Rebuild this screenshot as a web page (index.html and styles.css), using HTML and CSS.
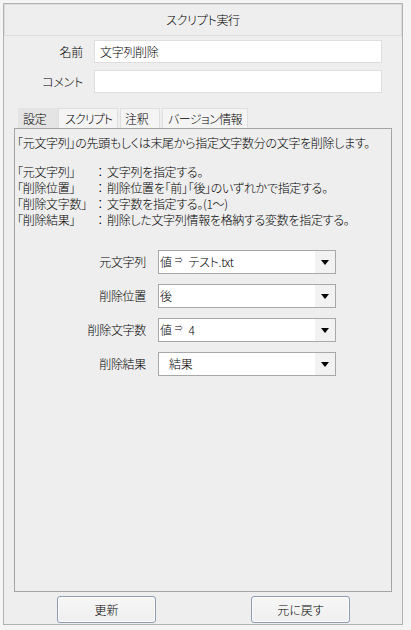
FILE: index.html
```html
<!DOCTYPE html>
<html lang="ja">
<head>
<meta charset="utf-8">
<link rel="stylesheet" href="styles.css">
</head>
<body>
<div class="frame">
  <div class="title">スクリプト実行</div>
  <div class="fields">
    <label class="flabel">名前</label>
    <div class="input">文字列削除</div>
    <label class="flabel">コメント</label>
    <div class="input"></div>
  </div>
  <div class="tabs">
    <div class="tab active t-a">設定</div>
    <div class="tab t-b">スクリプト</div>
    <div class="tab t-c">注釈</div>
    <div class="tab t-d">バージョン情報</div>
  </div>
  <div class="panel">
    <p class="intro">「元文字列」の先頭もしくは末尾から指定文字数分の文字を削除します。</p>
    <div class="desc">
      <div class="drow"><span class="dkey">「元文字列」</span><span class="dcolon">：</span><span>文字列を指定する。</span></div>
      <div class="drow"><span class="dkey">「削除位置」</span><span class="dcolon">：</span><span>削除位置を「前」「後」のいずれかで指定する。</span></div>
      <div class="drow"><span class="dkey">「削除文字数」</span><span class="dcolon">：</span><span>文字数を指定する。(1～)</span></div>
      <div class="drow"><span class="dkey">「削除結果」</span><span class="dcolon">：</span><span>削除した文字列情報を格納する変数を指定する。</span></div>
    </div>
    <div class="form">
      <div class="plabel">元文字列</div>
      <div class="select"><span class="val"><span>値</span><span class="arrow-sym">⇒</span><span class="v2">テスト.txt</span></span><span class="drop"><span class="tri"></span></span></div>
      <div class="plabel">削除位置</div>
      <div class="select"><span class="val">後</span><span class="drop"><span class="tri"></span></span></div>
      <div class="plabel">削除文字数</div>
      <div class="select"><span class="val"><span>値</span><span class="arrow-sym">⇒</span><span class="v2">4</span></span><span class="drop"><span class="tri"></span></span></div>
      <div class="plabel">削除結果</div>
      <div class="select"><span class="val pad">結果</span><span class="drop"><span class="tri"></span></span></div>
    </div>
  </div>
  <div class="buttons">
    <button class="btn">更新</button>
    <button class="btn">元に戻す</button>
  </div>
</div>
</body>
</html>
```
FILE: styles.css
```css
* { box-sizing: border-box; }
html, body { margin: 0; padding: 0; }
body {
  background: #f4f4f4;
  font-family: "Noto Sans CJK JP", "Noto Sans", sans-serif;
  font-size: 12px;
  font-weight: 300;
  color: #000;
  font-feature-settings: "palt";
  letter-spacing: -0.3px;
}
.frame {
  margin: 3px 0 0 3px;
  width: 400px;
  height: 622px;
  border: 1px solid #b2b2b2;
  background: #eeeeee;
  display: flex;
  flex-direction: column;
}
.title {
  height: 32px;
  border: 1px solid #dcdcdc;
  display: flex;
  align-items: center;
  justify-content: center;
  padding-bottom: 2px;
}
.fields {
  margin: 4px 20px 0 0;
  display: grid;
  grid-template-columns: 79px 1fr;
  column-gap: 11px;
  row-gap: 7px;
  align-items: center;
}
.flabel { text-align: right; padding-bottom: 1px; }
.input {
  height: 23px;
  background: #fff;
  border: 1px solid #dedede;
  padding: 0 0 1px 5px;
  display: flex;
  align-items: center;
}
.tabs {
  margin: 15px 0 0 14px;
  display: flex;
  height: 20px;
  gap: 2px;
}
.tab {
  height: 20px;
  background: #f4f4f4;
  border: 1px solid #dfdfdf;
  border-bottom: none;
  display: flex;
  align-items: center;
  white-space: nowrap;
}
.t-a { width: 40px; padding-left: 4px; margin-right: -2px; }
.t-b { width: 60px; padding-left: 6px; letter-spacing: -0.9px; }
.t-c { width: 40px; padding-left: 4px; }
.t-d { width: 86px; padding-left: 5px; letter-spacing: -0.6px; }
.tab.active {
  background: #e4e4e4;
  border-color: #e4e4e4;
}
.panel {
  flex: 1;
  margin: 0 10px;
  border: 1px solid #a3a3a3;
  padding: 6px 2px 0 2px;
  line-height: 16px;
}
.intro { margin: 0 0 13px 0; }
.drow { display: flex; }
.dkey { width: 77px; flex: none; }
.dcolon { width: 12px; flex: none; margin-right: 1px; font-feature-settings: normal; text-align: center; }
.form {
  margin: 22px 0 0 0;
  display: grid;
  grid-template-columns: 129px 178px;
  column-gap: 12px;
  row-gap: 10px;
  align-items: center;
}
.plabel { text-align: right; }
.select {
  height: 24px;
  border: 1px solid #a8a8a8;
  background: #fff;
  display: flex;
  align-items: stretch;
}
.val {
  flex: 1;
  display: flex;
  align-items: center;
  padding-left: 1px;
}
.val.pad { padding-left: 10px; }
.arrow-sym {
  font-size: 8px;
  margin: -5px 0 0 3px;
  font-feature-settings: normal;
}
.v2 { margin-left: 6px; }
.drop {
  width: 20px;
  background: #f2f2f2;
  display: flex;
  align-items: center;
  justify-content: center;
}
.tri {
  width: 0;
  height: 0;
  border-left: 4px solid transparent;
  border-right: 4px solid transparent;
  border-top: 5px solid #000;
}
.buttons {
  display: flex;
  justify-content: space-between;
  padding: 4px 52px 1px 53px;
}
.btn {
  width: 99px;
  height: 27px;
  font: inherit;
  font-size: 12px;
  color: #000;
  background: linear-gradient(#f6f6f6, #efefef);
  border: 1px solid #8e9bb0;
  border-radius: 3px;
  box-shadow: inset 0 0 0 1px #f8fbff;
  padding: 0 0 1px 0;
}
```
